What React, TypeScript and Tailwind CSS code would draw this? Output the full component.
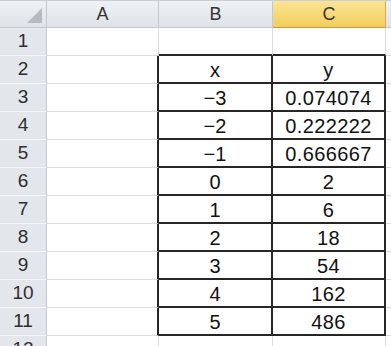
import clsx from "clsx";

const rows: [string, string][] = [
  ["x", "y"],
  ["−3", "0.074074"],
  ["−2", "0.222222"],
  ["−1", "0.666667"],
  ["0", "2"],
  ["1", "6"],
  ["2", "18"],
  ["3", "54"],
  ["4", "162"],
  ["5", "486"],
];

const font = "[font-family:'Liberation_Sans',Arial,sans-serif]";

function RowHead({ n }: { n: number }) {
  return (
    <div className="flex h-full w-[47px] shrink-0 items-center justify-center border-b border-r border-b-[#f4f6f8] border-r-[#c4c9d0] bg-[#e3e7ec] text-[19px] text-[#2e2e2e]">
      {n}
    </div>
  );
}

export default function App() {
  return (
    <div className={clsx("h-[346px] w-[391px] overflow-hidden bg-white", font)}>
      {/* column headers */}
      <div className="flex h-[28px] border-t border-[#c9ced5]">
        <div className="relative h-full w-[47px] shrink-0 border-b border-r border-[#c4c9d0] bg-gradient-to-b from-[#eef1f5] to-[#dfe3e9]">
          <svg className="absolute left-[27px] top-[7px]" width="15" height="15" viewBox="0 0 15 15">
            <polygon points="15,0 15,15 0,15" fill="#b6bbc2" />
          </svg>
        </div>
        <div className="flex w-[112px] shrink-0 items-center justify-center border-b border-r border-[#c4c9d0] bg-gradient-to-b from-[#eef1f5] to-[#dfe3e9] text-[18px] text-[#333]">
          A
        </div>
        <div className="flex w-[114px] shrink-0 items-center justify-center border-b border-r border-[#c4c9d0] bg-gradient-to-b from-[#eef1f5] to-[#dfe3e9] text-[18px] text-[#333]">
          B
        </div>
        <div className="flex w-[113px] shrink-0 items-center justify-center border-b border-r border-b-[#c49a3c] border-r-[#d2ad55] bg-gradient-to-b from-[#fbe594] to-[#f3cd5c] text-[18px] text-[#333]">
          C
        </div>
        <div className="flex-1 border-b border-[#c4c9d0] bg-gradient-to-b from-[#eef1f5] to-[#dfe3e9]" />
      </div>

      {/* row 1 */}
      <div className="flex h-[28px]">
        <RowHead n={1} />
        <div className="w-[112px] shrink-0 border-b border-r border-[#dadcdd]" />
        <div className="w-[114px] shrink-0 border-b-2 border-r border-b-[#262626] border-r-[#dadcdd]" />
        <div className="w-[113px] shrink-0 border-b-2 border-r border-b-[#262626] border-r-[#dadcdd]" />
        <div className="flex-1 border-b border-[#dadcdd]" />
      </div>

      {rows.map(([x, y], i) => (
        <div key={i} className="flex h-[28px] text-[20px] text-[#111]">
          <RowHead n={i + 2} />
          <div className="w-[112px] shrink-0 border-b border-r-2 border-b-[#dadcdd] border-r-[#262626]" />
          <div className="flex w-[114px] shrink-0 items-center justify-center border-b-2 border-r-2 border-[#262626] pt-[1px]">
            {x}
          </div>
          <div className="flex w-[113px] shrink-0 items-center justify-center border-b-2 border-r-2 border-[#262626] pt-[1px] tracking-[0.4px]">
            {y}
          </div>
          <div className="flex-1 border-b border-[#dadcdd]" />
        </div>
      ))}

      {/* row 12 */}
      <div className="flex h-[28px]">
        <RowHead n={12} />
        <div className="w-[112px] shrink-0 border-r border-[#dadcdd]" />
        <div className="w-[114px] shrink-0 border-r border-[#dadcdd]" />
        <div className="w-[113px] shrink-0 border-r border-[#dadcdd]" />
        <div className="flex-1" />
      </div>
    </div>
  );
}
